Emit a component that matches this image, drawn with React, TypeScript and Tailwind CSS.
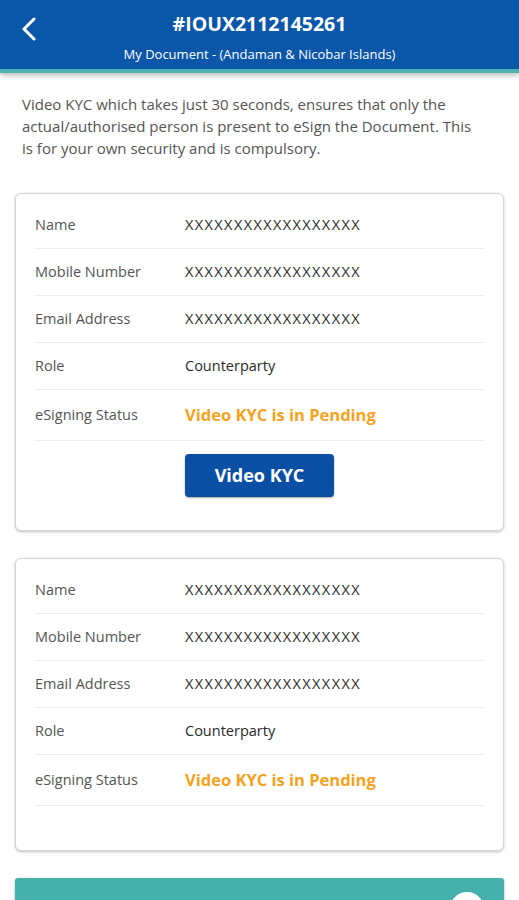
import React from 'react';

const font = { fontFamily: '"Open Sans", "Liberation Sans", sans-serif' };

interface Row {
  label: string;
  value: string;
  status?: boolean;
  masked?: boolean;
}

const ROWS: Row[] = [
  { label: 'Name', value: 'XXXXXXXXXXXXXXXXXX', masked: true },
  { label: 'Mobile Number', value: 'XXXXXXXXXXXXXXXXXX', masked: true },
  { label: 'Email Address', value: 'XXXXXXXXXXXXXXXXXX', masked: true },
  { label: 'Role', value: 'Counterparty' },
  { label: 'eSigning Status', value: 'Video KYC is in Pending', status: true },
];

const DetailCard: React.FC<{ showButton?: boolean }> = ({ showButton }) => (
  <div className="mx-[15px] rounded-md border border-[#d6d6d6] bg-white pt-2 pl-[18px] pr-[19px] shadow-[0_1px_3px_rgba(0,0,0,0.25)]">
    {ROWS.map((row) => (
      <div
        key={row.label}
        className={`flex items-center border-b border-[#ededed] ${row.status ? 'h-[51px]' : 'h-[47px]'}`}
      >
        <div className="w-[151px] shrink-0 pl-[1px] text-[14.5px] text-[#555]">{row.label}</div>
        {row.status ? (
          <div className="text-[16.5px] font-bold text-[#f5a31e]">{row.value}</div>
        ) : row.masked ? (
          <div className="text-[14.5px] tracking-[1.4px] text-[#2a2a2a]">{row.value}</div>
        ) : (
          <div className="text-[14.5px] text-[#2a2a2a]">{row.value}</div>
        )}
      </div>
    ))}
    {showButton ? (
      <div className="flex pt-[13px] pb-[33px] pl-[151px]">
        <button className="h-[43px] w-[149px] rounded-[4px] bg-[#0a4fa3] text-[18px] font-bold text-white shadow-[0_1px_2px_rgba(0,0,0,0.35)]">
          Video KYC
        </button>
      </div>
    ) : (
      <div className="h-[44px]" />
    )}
  </div>
);

export default function App() {
  return (
    <div className="flex h-[900px] w-[519px] flex-col overflow-hidden bg-white" style={font}>
      {/* Header */}
      <div className="relative z-10 shadow-[0_3px_4px_rgba(0,0,0,0.22)]">
        <div className="relative flex h-[69px] flex-col items-center bg-[#0a56a8] pt-[11px]">
          <svg
            className="absolute left-[20px] top-[17px]"
            width="18"
            height="24"
            viewBox="0 0 18 24"
            fill="none"
            stroke="white"
            strokeWidth="3"
            strokeLinecap="round"
            strokeLinejoin="round"
          >
            <path d="M14 2 L4 12 L14 22" />
          </svg>
          <div className="text-[19.5px] font-bold leading-[26px] text-white">#IOUX2112145261</div>
          <div className="mt-[8px] text-[13px] leading-[18px] text-white">
            My Document - (Andaman &amp; Nicobar Islands)
          </div>
        </div>
        <div className="h-[4px] bg-[#4bb3b0]" />
      </div>

      {/* Intro */}
      <p className="pl-[22px] pr-[36px] pt-[20px] text-[15px] leading-[22px] text-[#555]">
        Video KYC which takes just 30 seconds, ensures that only the actual/authorised person is present
        to eSign the Document. This is for your own security and is compulsory.
      </p>

      <div className="mt-[34px] flex flex-col gap-[27px]">
        <DetailCard showButton />
        <DetailCard />
        <div className="relative mx-[15px] h-[40px] overflow-hidden rounded-t-[3px] bg-[#45b0ac] shadow-[0_1px_3px_rgba(0,0,0,0.3)]">
          <div className="absolute right-[20px] top-[14px] h-[34px] w-[34px] rounded-full bg-white" />
        </div>
      </div>
    </div>
  );
}
